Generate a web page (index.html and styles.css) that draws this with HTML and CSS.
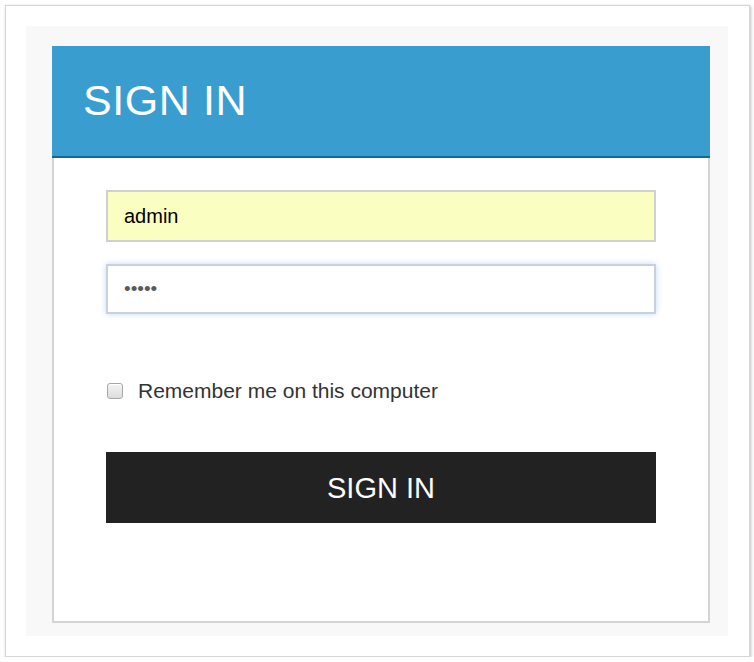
FILE: index.html
```html
<!DOCTYPE html>
<html>
<head>
<meta charset="utf-8">
<link rel="stylesheet" href="styles.css">
</head>
<body>
<div class="frame">
  <div class="panel">
    <div class="card">
      <div class="card-head"><h1 class="title">SIGN IN</h1></div>
      <form class="card-body">
        <input class="field field-auto" type="text" value="admin">
        <input class="field field-focus" type="password" value="admin">
        <label class="remember"><input class="check" type="checkbox"><span>Remember me on this computer</span></label>
        <button class="submit" type="button">SIGN IN</button>
      </form>
    </div>
  </div>
</div>
</body>
</html>
```

FILE: styles.css
```css
* { box-sizing: border-box; }
html, body { margin: 0; padding: 0; background: #fff; }
body { font-family: "Liberation Sans", Arial, sans-serif; }

.frame {
  margin: 5px 0 0 5px;
  width: 745px;
  height: 652px;
  border: 1px solid #d6d6d6;
  box-shadow: 1px 1px 3px rgba(0,0,0,0.25);
  background: #fff;
  padding: 20px 21px 20px 20px;
}
.panel {
  background: #f8f8f8;
  height: 610px;
  padding: 20px 18px 13px 26px;
}
.card {
  width: 658px;
  height: 577px;
  display: flex;
  flex-direction: column;
}
.card-head {
  height: 112px;
  background: #3a9dd0;
  border-bottom: 2px solid #14679a;
  padding: 30px 0 0 31px;
}
.title {
  margin: 0;
  font-weight: normal;
  font-size: 43px;
  line-height: 48px;
  color: #fff;
  letter-spacing: 0.6px;
}
.card-body {
  flex: 1;
  background: #fff;
  border: 2px solid #d4d4d4;
  border-top: none;
  padding: 32px 52px 0 52px;
  display: flex;
  flex-direction: column;
}
.field {
  display: block;
  width: 550px;
  height: 52px;
  border: 2px solid #d0d0d0;
  padding: 0 16px;
  font-family: "Liberation Sans", Arial, sans-serif;
  font-size: 20px;
  color: #000;
  outline: none;
  margin: 0;
}
.field-auto { background: #fafec0; }
.field-focus {
  margin-top: 22px;
  height: 50px;
  background: #fff;
  border-color: #c9d2dc;
  box-shadow: 0 0 6px rgba(90,150,225,0.35);
  font-size: 19px;
  color: #5a5a5a;
  letter-spacing: 0;
}
.remember {
  display: flex;
  align-items: center;
  margin-top: 66px;
  height: 22px;
  font-size: 21px;
  color: #333;
}
.check {
  -webkit-appearance: none;
  appearance: none;
  width: 16px;
  height: 16px;
  margin: 0 15px 0 1px;
  border: 1px solid #a8a8a8;
  border-radius: 3px;
  background: linear-gradient(#f4f4f4, #dcdcdc);
  box-shadow: inset 0 1px 0 #fff;
}
.submit {
  margin-top: 50px;
  width: 550px;
  height: 71px;
  border: none;
  background: #222;
  color: #fff;
  font-family: "Liberation Sans", Arial, sans-serif;
  font-size: 29px;
  padding: 0;
  padding-top: 2px;
}
```
